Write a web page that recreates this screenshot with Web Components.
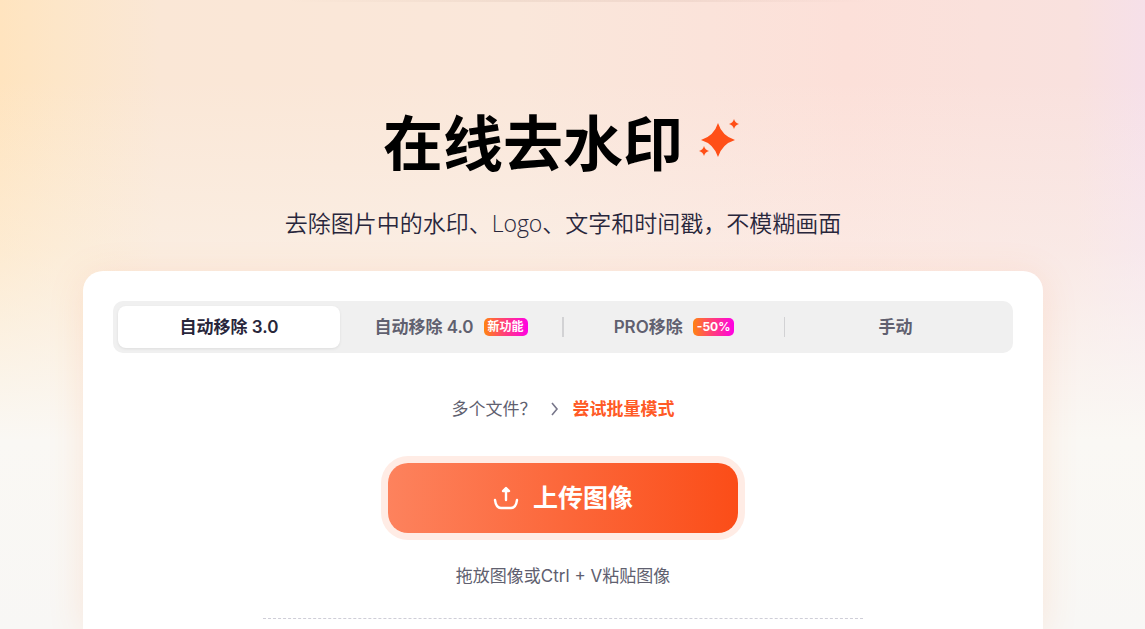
<!DOCTYPE html>
<html lang="zh-CN">
<head>
<meta charset="utf-8">
<meta name="viewport" content="width=device-width, initial-scale=1">
<title>在线去水印</title>
<style>
    body {
        margin: 0;
        font-family: Inter, "Noto Sans CJK SC", sans-serif;
        color: #28263b;
    }
</style>
</head>
<body>
<watermark-page>
    <hero-title slot="hero">
        在线去水印
        <span slot="subtitle">去除图片中的水印、Logo、文字和时间戳，不模糊画面</span>
    </hero-title>
    <mode-tabs>
        <mode-tab active>自动移除 3.0</mode-tab>
        <mode-tab>自动移除 4.0<tag-badge slot="badge">新功能</tag-badge></mode-tab>
        <mode-tab divided="wide">PRO移除<tag-badge slot="badge">-50%</tag-badge></mode-tab>
        <mode-tab divided>手动</mode-tab>
    </mode-tabs>
    <batch-link href="#batch">多个文件？<span slot="link">尝试批量模式</span></batch-link>
    <upload-button>上传图像<span slot="hint">拖放图像或Ctrl + V粘贴图像</span></upload-button>
</watermark-page>

<script>
class WatermarkPage extends HTMLElement {
    constructor() {
        super();
        this.attachShadow({mode: "open"});
        this.shadowRoot.innerHTML = `
            <style>
                :host {
                    display: flex;
                    flex-direction: column;
                    box-sizing: border-box;
                    min-height: 100vh;
                    padding: 106px 39px 0 20px;
                    background:
                        linear-gradient(90deg, transparent 25%, rgba(160, 120, 100, .1) 45%, rgba(160, 120, 100, .1) 60%, transparent 76%) 0 0 / 100% 2px no-repeat,
                        linear-gradient(180deg, rgba(250, 248, 244, 0) 80px, rgba(250, 248, 244, .35) 250px, #faf8f4 440px, #f8f7f5),
                        linear-gradient(90deg, #ffe4bf 0, #fde6c8 5%, #fae7d6 14%, #fae7da 45%, #fbe3da 62%, #fce0d9 74%, #fae1dc 86%, #f9e1de 94%, #f6e0e9 100%);
                }
                main {
                    display: flex;
                    flex-direction: column;
                    flex: 1;
                    box-sizing: border-box;
                    width: 100%;
                    max-width: 960px;
                    margin: 31px auto 0;
                    padding: 30px 30px 10px;
                    border-radius: 20px 20px 0 0;
                    background: #fff;
                    box-shadow: 0 4px 36px rgba(255, 130, 60, .14);
                }
                hr {
                    width: 100%;
                    max-width: 600px;
                    margin: 29px auto 0;
                    border: 0;
                    border-top: 1px dashed #cfced8;
                }
            </style>
            <slot name="hero"></slot>
            <main>
                <slot></slot>
                <hr>
            </main>
        `;
    }
}
customElements.define('watermark-page', WatermarkPage);

class HeroTitle extends HTMLElement {
    constructor() {
        super();
        this.attachShadow({mode: "open"});
        this.shadowRoot.innerHTML = `
            <style>
                :host {
                    display: block;
                    text-align: center;
                }
                h1 {
                    display: flex;
                    align-items: center;
                    justify-content: center;
                    gap: 16px;
                    margin: 0;
                    font-family: "Noto Sans CJK SC", sans-serif;
                    font-size: 60px;
                    font-weight: 700;
                    line-height: 68px;
                    color: #000;
                }
                svg {
                    overflow: visible;
                    fill: #ff4f17;
                }
                p {
                    margin: 32px 0 0;
                    font-family: "Open Sans", "Noto Sans CJK SC", sans-serif;
                    font-size: 23px;
                    font-weight: 350;
                    line-height: 34px;
                }
            </style>
            <h1>
                <span><slot></slot></span>
                <svg width="44" height="44" viewBox="0 -2 44 44" aria-hidden="true">
                    <path d="M19 3Q23 16 36 20Q23 24 19 37Q15 24 2 20Q15 16 19 3Z"/>
                    <path d="M35 -1Q36 3 40 4Q36 5 35 9Q34 5 30 4Q34 3 35 -1Z"/>
                    <path d="M5 26Q6 30 10 31Q6 32 5 36Q4 32 0 31Q4 30 5 26Z"/>
                </svg>
            </h1>
            <p><slot name="subtitle"></slot></p>
        `;
    }
}
customElements.define('hero-title', HeroTitle);

class ModeTabs extends HTMLElement {
    constructor() {
        super();
        this.attachShadow({mode: "open"});
        this.shadowRoot.innerHTML = `
            <style>
                :host {
                    display: flex;
                    padding: 5px 7px 5px 5px;
                    border-radius: 10px;
                    background: #f0f0f0;
                }
            </style>
            <slot></slot>
        `;
    }
    connectedCallback() {
        this.addEventListener('click', this._selectTab.bind(this));
    }
    _selectTab(event) {
        const tab = event.target.closest('mode-tab');
        if (!tab) return;
        this.querySelectorAll('mode-tab').forEach((item) => {
            item.toggleAttribute('active', item === tab);
        });
    }
}
customElements.define('mode-tabs', ModeTabs);

class ModeTab extends HTMLElement {
    static get observedAttributes() {
        return ['active'];
    }
    constructor() {
        super();
        this.attachShadow({mode: "open"});
        this.shadowRoot.innerHTML = `
            <style>
                :host {
                    display: flex;
                    align-items: center;
                    flex: 1 1 0;
                    min-width: 0;
                }
                :host([divided])::before {
                    content: "";
                    width: 1px;
                    height: 20px;
                    background: #d2d2d4;
                }
                :host([divided="wide"])::before {
                    width: 2px;
                }
                button {
                    display: flex;
                    align-items: center;
                    justify-content: center;
                    gap: 10px;
                    flex: 1;
                    height: 42px;
                    padding: 0;
                    border: 0;
                    border-radius: 8px;
                    background: none;
                    font: 600 17px/26px Inter, "Noto Sans CJK SC", sans-serif;
                    color: #60606f;
                    cursor: pointer;
                }
                :host([active]) button {
                    background: #fff;
                    color: #28263b;
                    box-shadow: 0 1px 3px rgba(0, 0, 0, .08);
                }
            </style>
            <button type="button"><span><slot></slot></span><slot name="badge"></slot></button>
        `;
    }
    attributeChangedCallback() {
        this.shadowRoot.querySelector('button').setAttribute('aria-pressed', this.hasAttribute('active'));
    }
}
customElements.define('mode-tab', ModeTab);

class TagBadge extends HTMLElement {
    constructor() {
        super();
        this.attachShadow({mode: "open"});
        this.shadowRoot.innerHTML = `
            <style>
                :host {
                    display: block;
                    padding: 0 4px;
                    border-radius: 5px;
                    background: linear-gradient(90deg, #ff8412, #ff3a80 50%, #ff00e5);
                    font-size: 12px;
                    font-weight: 700;
                    line-height: 18px;
                    color: #fff;
                }
            </style>
            <slot></slot>
        `;
    }
}
customElements.define('tag-badge', TagBadge);

class BatchLink extends HTMLElement {
    constructor() {
        super();
        this.attachShadow({mode: "open"});
        this.shadowRoot.innerHTML = `
            <style>
                :host {
                    display: flex;
                    align-items: center;
                    justify-content: center;
                    gap: 14px;
                    margin: 43px 0 41px;
                    font-size: 17px;
                    line-height: 26px;
                    color: #60606f;
                }
                svg {
                    fill: none;
                    stroke: #77768a;
                    stroke-width: 1.6;
                }
                a {
                    font-weight: 700;
                    color: #ff5a26;
                    text-decoration: none;
                }
            </style>
            <span><slot></slot></span>
            <svg width="8" height="14" viewBox="0 0 8 14" aria-hidden="true"><path d="M1 1L6 7L1 13"/></svg>
            <a><slot name="link"></slot></a>
        `;
    }
    connectedCallback() {
        this.shadowRoot.querySelector('a').href = this.getAttribute('href');
    }
}
customElements.define('batch-link', BatchLink);

class UploadButton extends HTMLElement {
    constructor() {
        super();
        this.attachShadow({mode: "open"});
        this.shadowRoot.innerHTML = `
            <style>
                :host {
                    display: flex;
                    flex-direction: column;
                    align-items: center;
                }
                button {
                    display: flex;
                    align-items: center;
                    justify-content: center;
                    gap: 14px;
                    width: 100%;
                    max-width: 350px;
                    height: 70px;
                    padding: 0;
                    border: 0;
                    border-radius: 20px;
                    background: linear-gradient(90deg, #fd825d, #fb4d18);
                    box-shadow: 0 0 0 7px #ffece5;
                    font: 700 25px/36px Inter, "Noto Sans CJK SC", sans-serif;
                    color: #fff;
                    cursor: pointer;
                }
                svg {
                    fill: none;
                    stroke: #fff;
                    stroke-width: 2.4;
                    stroke-linecap: round;
                    stroke-linejoin: round;
                }
                p {
                    margin: 30px 0 0;
                    font-size: 17px;
                    line-height: 26px;
                    color: #60606f;
                }
            </style>
            <button type="button">
                <svg width="26" height="26" viewBox="0 0 26 26" aria-hidden="true">
                    <path d="M2 15Q3 23 8 23H18Q23 23 24 15"/>
                    <path d="M13 15V6"/>
                    <path d="M13 3L16 6H10Z" fill="#fff"/>
                </svg>
                <span><slot></slot></span>
            </button>
            <p><slot name="hint"></slot></p>
        `;
    }
}
customElements.define('upload-button', UploadButton);
</script>
</body>
</html>
